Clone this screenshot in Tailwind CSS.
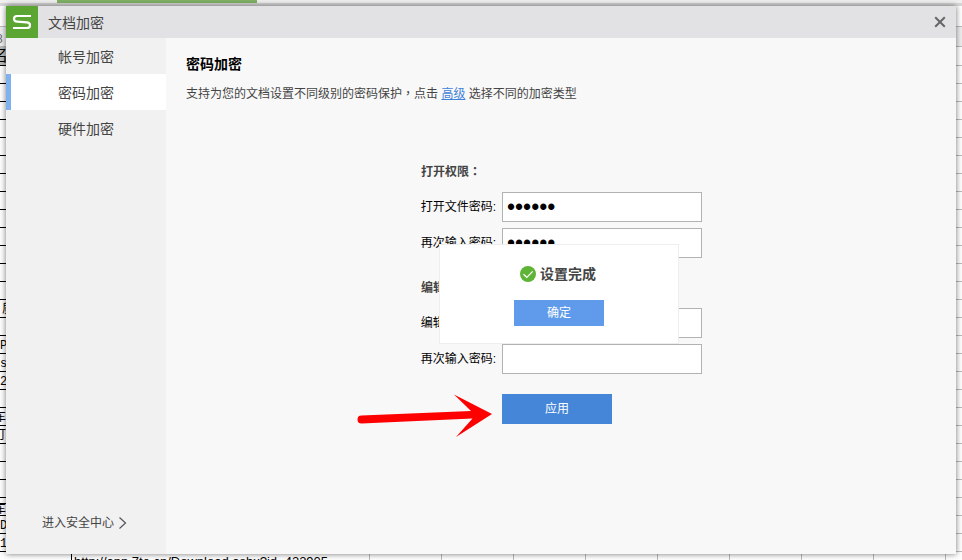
<!DOCTYPE html>
<html lang="zh-CN">
<head>
<meta charset="utf-8">
<title>文档加密</title>
<script src="https://cdn.jsdelivr.net/npm/@tailwindcss/browser@4"></script>
</head>
<body class="relative min-h-screen overflow-hidden bg-white font-['Liberation_Sans','Noto_Sans_CJK_SC',sans-serif] text-xs text-[#444]">

<!-- Spreadsheet behind the dialog -->
<div class="absolute inset-0 flex flex-col overflow-hidden" aria-hidden="true">
  <div class="h-[3px] shrink-0 bg-[#f0f0f0] pl-[57px]"><div class="h-[3px] w-[200px] bg-[#7fb165]"></div></div>
  <div class="h-[3px] shrink-0 bg-[#d8d8d8]"></div>
  <div class="h-[21px] shrink-0 border-b border-[#bbb] bg-white"></div>
  <div class="flex h-5 shrink-0 items-center border-b border-[#bbb] bg-[#eee]"><span class="-ml-1 pt-1 text-[#666]">8</span></div>
  <div class="flex min-h-0 flex-1 justify-between font-['Liberation_Mono','Noto_Sans_CJK_SC',monospace] leading-5 text-black">
    <div class="flex w-[6px] flex-col overflow-hidden whitespace-nowrap">
      <div class="h-[19px] shrink-0 border-b bg-[#bbb] text-base leading-5"><div class="-ml-2">名</div></div>
      <div class="h-[18px] shrink-0 border-b"></div>
      <div class="h-[18px] shrink-0 border-b"></div>
      <div class="h-[18px] shrink-0 border-b"></div>
      <div class="h-[18px] shrink-0 border-b"></div>
      <div class="h-[18px] shrink-0 border-b"></div>
      <div class="h-[18px] shrink-0 border-b"></div>
      <div class="h-[18px] shrink-0 border-b"></div>
      <div class="h-[18px] shrink-0 border-b"></div>
      <div class="h-[18px] shrink-0 border-b"></div>
      <div class="h-[18px] shrink-0 border-b"></div>
      <div class="h-[18px] shrink-0 border-b"></div>
      <div class="h-[18px] shrink-0 border-b"></div>
      <div class="h-[18px] shrink-0 border-b"></div>
      <div class="h-[18px] shrink-0 border-b pl-[2px]">质</div>
      <div class="h-[18px] shrink-0 border-b"></div>
      <div class="h-[18px] shrink-0 border-b">P</div>
      <div class="h-[18px] shrink-0 border-b">s</div>
      <div class="h-[18px] shrink-0 border-b">2</div>
      <div class="h-[18px] shrink-0 border-b"></div>
      <div class="h-[18px] shrink-0 border-b"><div class="-ml-1.5">车</div></div>
      <div class="h-[18px] shrink-0 border-b"><div class="-ml-1.5">订</div></div>
      <div class="h-[18px] shrink-0 border-b"></div>
      <div class="h-[18px] shrink-0 border-b"></div>
      <div class="h-[18px] shrink-0 border-b"></div>
      <div class="h-[6px] shrink-0 border-b"></div>
      <div class="h-3 shrink-0 border-b leading-3"><div class="-ml-1.5">车</div></div>
      <div class="h-[18px] shrink-0 border-b">D</div>
      <div class="h-[18px] shrink-0 border-b">1</div>
    </div>
    <div class="flex w-[6px] flex-col border-[#bbb] *:border-[#bbb]">
      <div class="h-[19px] shrink-0 border-b"></div>
      <div class="h-[18px] shrink-0 border-b"></div>
      <div class="h-[18px] shrink-0 border-b"></div>
      <div class="h-[18px] shrink-0 border-b"></div>
      <div class="h-[18px] shrink-0 border-b"></div>
      <div class="h-[18px] shrink-0 border-b"></div>
      <div class="h-[18px] shrink-0 border-b"></div>
      <div class="h-[18px] shrink-0 border-b"></div>
      <div class="h-[18px] shrink-0 border-b"></div>
      <div class="h-[18px] shrink-0 border-b"></div>
      <div class="h-[18px] shrink-0 border-b"></div>
      <div class="h-[18px] shrink-0 border-b"></div>
      <div class="h-[18px] shrink-0 border-b"></div>
      <div class="h-[18px] shrink-0 border-b"></div>
      <div class="h-[18px] shrink-0 border-b"></div>
      <div class="h-[18px] shrink-0 border-b"></div>
      <div class="h-[18px] shrink-0 border-b"></div>
      <div class="h-[18px] shrink-0 border-b"></div>
      <div class="h-[18px] shrink-0 border-b"></div>
      <div class="h-[18px] shrink-0 border-b"></div>
      <div class="h-[18px] shrink-0 border-b"></div>
      <div class="h-[18px] shrink-0 border-b"></div>
      <div class="h-[18px] shrink-0 border-b"></div>
      <div class="h-[18px] shrink-0 border-b"></div>
      <div class="h-[18px] shrink-0 border-b"></div>
      <div class="h-[18px] shrink-0 border-b"></div>
      <div class="h-[18px] shrink-0 border-b"></div>
      <div class="h-[18px] shrink-0 border-b"></div>
    </div>
  </div>
  <div class="flex h-[8px] shrink-0 overflow-hidden pl-[71px] text-[13px] leading-5 text-black">
    <div class="w-[298px] shrink-0 border-l pl-[2px]">http://app.7te.cn/Download.ashx?id=432905</div>
    <div class="flex *:w-[72px] *:shrink-0 *:border-l *:border-[#bbb]">
      <div></div><div></div><div></div><div></div><div></div><div></div><div></div><div></div><div></div>
    </div>
  </div>
</div>

<!-- Dialog -->
<div class="relative flex min-h-screen flex-col p-[6px]">
  <section class="flex flex-1 flex-col bg-[#f8f8f8] shadow-[0_0_6px_rgba(0,0,0,0.55)]" aria-labelledby="dialog-title">
    <header class="flex h-8 items-center bg-[#e2e2e4]">
      <svg class="size-8 bg-[#5ba532]" viewBox="0 0 32 32" fill="none" stroke="#fff" stroke-width="2.2" aria-hidden="true">
        <path d="M25 10H11Q8 10 8 12.800Q8 15.500 11.200 15.700L20.800 16.300Q24 16.500 24 19.200Q24 22 21 22H7"/>
      </svg>
      <h1 id="dialog-title" class="ml-2.5 flex-1 pt-0.5 text-sm">文档加密</h1>
      <button class="mr-2.5 flex size-3 items-center justify-center" aria-label="关闭">
        <svg class="size-3" viewBox="0 0 12 12" stroke="#666" stroke-width="2"><path d="M1.200 1.200l9.600 9.600M10.800 1.200l-9.600 9.600"/></svg>
      </button>
    </header>

    <div class="flex flex-1">
      <nav class="flex w-40 flex-col bg-[#f1f1f1] text-sm">
        <a href="#account" class="flex h-9 items-center justify-center pt-0.5">帐号加密</a>
        <a href="#password" class="flex h-9 items-center justify-center border-l-[5px] border-[#7eb2ee] bg-white pt-0.5 pr-[5px]" aria-current="page">密码加密</a>
        <a href="#hardware" class="flex h-9 items-center justify-center pt-0.5">硬件加密</a>
        <a href="#center" class="mt-auto mb-[23px] flex items-center gap-1 pl-9 text-xs">进入安全中心
          <svg class="size-3" viewBox="0 0 12 12" fill="none" stroke="#555" stroke-width="1.2"><path d="M1.500 .5L7.500 6L1.500 11.500"/></svg>
        </a>
      </nav>

      <main class="relative flex-1">
        <h2 class="mt-4 ml-5 text-sm font-bold text-black">密码加密</h2>
        <p class="mt-3 ml-5 h-4 leading-4">支持为您的文档设置不同级别的密码保护<span class="font-['Noto_Sans_CJK_TC',sans-serif] leading-none" lang="zh-TW">，</span>点击 <a href="#advanced" class="text-[#3f83d8] underline">高级</a> 选择不同的加密类型</p>

        <form class="mx-auto mt-[62px] grid w-[282px] grid-cols-[76px_200px] gap-[6px] text-black">
          <h3 class="col-span-2 mb-[6px] h-4 pl-px leading-4 font-bold text-[#444]">打开权限<span class="font-['Noto_Sans_CJK_TC',sans-serif] leading-none" lang="zh-TW">：</span></h3>
          <label for="open1" class="flex h-[30px] items-center justify-end whitespace-nowrap">打开文件密码:</label>
          <input id="open1" type="password" value="123456" class="h-[30px] border border-[#b2b2b2] bg-white px-1 font-['Liberation_Sans',sans-serif] text-[23px]">
          <label for="open2" class="flex h-[30px] items-center justify-end whitespace-nowrap">再次输入密码:</label>
          <input id="open2" type="password" value="123456" class="h-[30px] border border-[#b2b2b2] bg-white px-1 font-['Liberation_Sans',sans-serif] text-[23px]">
          <h3 class="col-span-2 mt-4 mb-[6px] h-4 pl-px leading-4 font-bold text-[#444]">编辑权限<span class="font-['Noto_Sans_CJK_TC',sans-serif] leading-none" lang="zh-TW">：</span></h3>
          <label for="edit1" class="flex h-[30px] items-center justify-end whitespace-nowrap">编辑文件密码:</label>
          <input id="edit1" type="password" class="h-[30px] border border-[#b2b2b2] bg-white px-1 font-['Liberation_Sans',sans-serif] text-[23px]">
          <label for="edit2" class="flex h-[30px] items-center justify-end whitespace-nowrap">再次输入密码:</label>
          <input id="edit2" type="password" class="h-[30px] border border-[#b2b2b2] bg-white px-1 font-['Liberation_Sans',sans-serif] text-[23px]">
          <button type="button" class="col-start-2 mt-[14px] h-[30px] w-[110px] bg-[#4586d9] text-white">应用</button>
        </form>

        <svg class="absolute top-[352px] left-1/2 -ml-[205px] h-12 w-[140px]" viewBox="356 390 140 48" fill="#f00" aria-hidden="true">
          <path d="M361.500 415.500L471 411L454 394.500L492 414L456 437L472.500 418.500L361.500 423.500A4 4 0 0 1 361.500 415.500Z"/>
        </svg>

        <div role="alertdialog" aria-labelledby="done" class="absolute top-[206px] left-1/2 -ml-[122px] flex h-[100px] w-60 flex-col items-center border border-[#eee] bg-white pt-[19px]">
          <div class="flex items-center gap-1 pr-0.5">
            <svg class="size-4" viewBox="0 0 16 16" aria-hidden="true"><circle cx="8" cy="8" r="8" fill="#5fb336"/><path d="M3.500 8.200L6.800 11.300L12.700 5.300" fill="none" stroke="#fff" stroke-width="1.200"/></svg>
            <p id="done" class="text-sm font-bold">设置完成</p>
          </div>
          <button class="mt-4 h-[26px] w-[90px] bg-[#5f9bea] text-white">确定</button>
        </div>
      </main>
    </div>
  </section>
</div>
</body>
</html>
